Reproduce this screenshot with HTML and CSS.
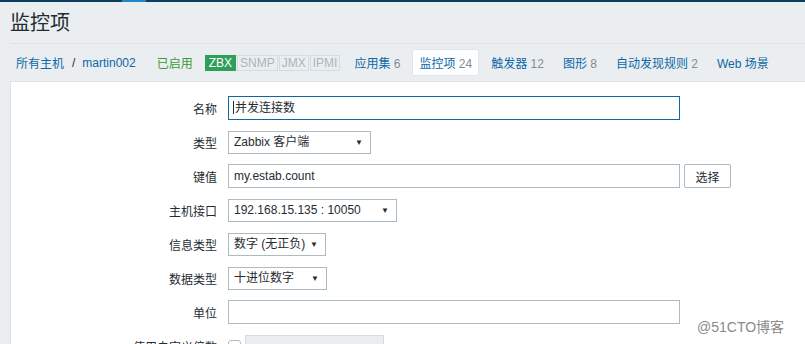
FILE: index.html
```html
<!DOCTYPE html>
<html lang="zh">
<head>
    <meta charset="UTF-8">
    <title>监控项</title>
    <link rel="stylesheet" href="styles.css">
</head>
<body>
    <div class="topbar"><span class="topbar-mark"></span></div>
    <div class="header">
        <h1>监控项</h1>
    </div>
    <div class="nav">
        <a class="crumb">所有主机</a>
        <span class="slash">/</span>
        <a class="crumb">martin002</a>
        <span class="status">已启用</span>
        <div class="badges">
            <span class="badge on">ZBX</span><span class="badge">SNMP</span><span class="badge">JMX</span><span class="badge">IPMI</span>
        </div>
        <a class="tab">应用集 <span class="count">6</span></a>
        <a class="tab active">监控项 <span class="count">24</span></a>
        <a class="tab">触发器 <span class="count">12</span></a>
        <a class="tab">图形 <span class="count">8</span></a>
        <a class="tab">自动发现规则 <span class="count">2</span></a>
        <a class="tab">Web 场景</a>
    </div>
    <div class="panel">
        <div class="form">
            <label class="label">名称</label>
            <div class="field"><div class="input wide focus"><span class="caret"></span>并发连接数</div></div>

            <label class="label">类型</label>
            <div class="field"><div class="select w142">Zabbix 客户端<span class="arrow">▼</span></div></div>

            <label class="label">键值</label>
            <div class="field"><div class="input wide">my.estab.count</div><button class="btn">选择</button></div>

            <label class="label">主机接口</label>
            <div class="field"><div class="select w168">192.168.15.135 : 10050<span class="arrow">▼</span></div></div>

            <label class="label">信息类型</label>
            <div class="field"><div class="select w97">数字 (无正负)<span class="arrow">▼</span></div></div>

            <label class="label">数据类型</label>
            <div class="field"><div class="select w98">十进位数字<span class="arrow">▼</span></div></div>

            <label class="label">单位</label>
            <div class="field"><div class="input wide"></div></div>

            <label class="label">使用自定义倍数</label>
            <div class="field"><span class="check"></span><div class="select disabled w138"><span class="arrow">▼</span></div></div>
        </div>
    </div>
    <div class="watermark">@51CTO博客</div>
</body>
</html>
```

FILE: styles.css
```css
body, html {
    margin: 0;
    padding: 0;
    height: 100%;
    overflow: hidden;
}
body {
    background-color: #ebeef0;
    color: #1f2c33;
    font-family: 'Liberation Sans', Arial, 'Noto Sans CJK SC', sans-serif;
    font-size: 12px;
}
.topbar {
    height: 2px;
    background-color: #0c3e60;
    padding-left: 122px;
}
.topbar-mark {
    display: block;
    width: 24px;
    height: 2px;
    background-color: #1f86c8;
}
.header {
    margin-left: 10px;
    height: 41px;
    border-bottom: 1px solid #dde3e6;
}
.header h1 {
    margin: 0;
    font-size: 20px;
    font-weight: normal;
    line-height: 42px;
    color: #1f2c33;
}
.nav {
    height: 37px;
    display: flex;
    align-items: center;
    padding-left: 16px;
}
.crumb {
    color: #0b68a8;
}
.slash {
    color: #1f2c33;
    margin: 0 7px 0 8px;
}
.status {
    color: #3a9b36;
    margin-left: 21px;
}
.badges {
    display: flex;
    margin-left: 12px;
    margin-right: 6px;
}
.badge {
    height: 14px;
    line-height: 14px;
    padding: 0 2px;
    border: 1px solid #d5dcdf;
    color: #a9b6bc;
    font-size: 12px;
    margin-right: 1px;
}
.badge.on {
    background-color: #2f9e5a;
    border-color: #2f9e5a;
    color: #fff;
    padding: 0 3px;
}
.tab {
    color: #0b68a8;
    padding: 4px 6px;
    margin-right: 5px;
    border: 1px solid transparent;
    border-radius: 2px;
}
.tab.active {
    background-color: #fff;
    border-color: #e2e6e8;
}
.count {
    color: #7a8e98;
}
.panel {
    margin-left: 10px;
    height: 262px;
    background-color: #fff;
    border-left: 1px solid #dde3e6;
    border-top: 1px solid #dde3e6;
    padding-top: 14px;
}
.form {
    display: grid;
    grid-template-columns: 206px 1fr;
    column-gap: 11px;
    row-gap: 10px;
    align-items: center;
}
.label {
    text-align: right;
}
.field {
    display: flex;
    align-items: center;
    height: 24px;
}
.input {
    box-sizing: border-box;
    height: 24px;
    line-height: 22px;
    border: 1px solid #acbbc2;
    padding: 0 5px;
    background-color: #fff;
}
.input.wide {
    width: 452px;
}
.input.focus {
    border-color: #10679f;
    padding-left: 4px;
}
.caret {
    display: inline-block;
    width: 1px;
    height: 13px;
    background-color: #1f2c33;
    vertical-align: -2px;
    margin-right: 1px;
}
.btn {
    margin-left: 4px;
    height: 24px;
    width: 47px;
    border: 1px solid #acbbc2;
    border-radius: 2px;
    background-color: #fff;
    color: #1f2c33;
    font-family: inherit;
    font-size: 12px;
    padding: 0;
}
.select {
    box-sizing: border-box;
    height: 23px;
    line-height: 21px;
    border: 1px solid #acbbc2;
    padding: 0 7px 0 5px;
    display: flex;
    justify-content: space-between;
    white-space: nowrap;
}
.arrow {
    font-size: 8px;
    color: #1f2c33;
}
.w142 { width: 143px; }
.w168 { width: 169px; }
.w97 { width: 98px; }
.w98 { width: 99px; }
.w138 { width: 139px; }
.select.disabled {
    margin-left: 4px;
    background-color: #ebeef0;
    border-color: #d5dbde;
}
.select.disabled .arrow {
    color: #acbbc2;
    margin-left: auto;
}
.check {
    width: 11px;
    height: 11px;
    border: 1px solid #acbbc2;
    border-radius: 3px;
}
.watermark {
    position: absolute;
    left: 697px;
    top: 316px;
    font-size: 14px;
    color: #8a8a8a;
}
```
